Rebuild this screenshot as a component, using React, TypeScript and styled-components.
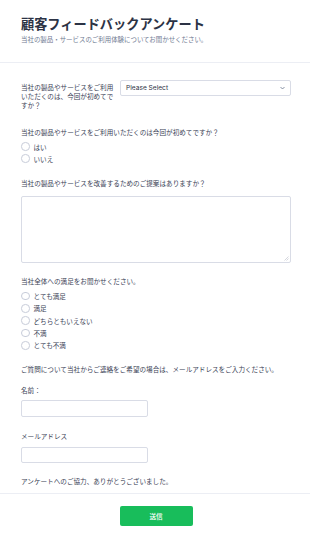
import React from "react";
import styled, { createGlobalStyle } from "styled-components";

const Global = createGlobalStyle`
  html, body { margin: 0; padding: 0; background: #fff; }
  body { font-family: Inter, "Noto Sans CJK JP", "Noto Sans", sans-serif; color: #2c3345; }
  * { box-sizing: border-box; }
`;

const Page = styled.div`
  width: 310px;
  background: #fff;
`;

const Header = styled.header`
  padding: 16px 19px 17px 21px;
  border-bottom: 1px solid #eceef4;
`;

const Title = styled.h1`
  margin: 0;
  font-size: 13.2px;
  line-height: 16px;
  font-weight: 700;
  color: #2c3345;
  letter-spacing: 0;
`;

const Subtitle = styled.p`
  margin: 3.5px 0 0;
  font-size: 6.45px;
  line-height: 9px;
  color: #6f7a92;
`;

const Form = styled.form`
  padding: 17px 19px 0 21px;
  display: flex;
  flex-direction: column;
`;

const Section = styled.div<{ $mt?: number }>`
  margin-top: ${(p) => p.$mt ?? 0}px;
  display: flex;
  flex-direction: column;
`;

const InlineRow = styled.div`
  display: flex;
  align-items: flex-start;
  gap: 6px;
`;

const Label = styled.label<{ $width?: number; $mt?: number }>`
  display: block;
  font-size: 6.6px;
  line-height: 9px;
  font-weight: 400;
  color: #3a4256;
  ${(p) => (p.$width ? `width: ${p.$width}px; flex: none;` : "")}
  margin-top: ${(p) => p.$mt ?? 0}px;
`;

const SelectBox = styled.div`
  flex: 1;
  height: 16.5px;
  border: 1px solid #d9dce6;
  border-radius: 2px;
  display: flex;
  align-items: center;
  justify-content: space-between;
  padding: 0 5px 0 5px;
  font-size: 6.6px;
  color: #2c3345;
`;

const Options = styled.div<{ $mt: number; $step: number }>`
  margin-top: ${(p) => p.$mt}px;
  display: flex;
  flex-direction: column;
  & > * { height: ${(p) => p.$step}px; }
`;

const Option = styled.div`
  display: flex;
  align-items: center;
  gap: 4px;
  font-size: 6.6px;
  color: #3a4256;
`;

const Radio = styled.span`
  width: 8.5px;
  height: 8.5px;
  border-radius: 50%;
  border: 1px solid #c7ccd9;
  background: #fff;
  flex: none;
`;

const TextArea = styled.div`
  margin-top: 6.5px;
  height: 67px;
  border: 1px solid #d9dce6;
  border-radius: 2px;
  position: relative;
`;

const Grip = styled.svg`
  position: absolute;
  right: 1px;
  bottom: 1px;
`;

const Input = styled.div`
  margin-top: 4.5px;
  width: 127px;
  height: 16.5px;
  border: 1px solid #d9dce6;
  border-radius: 2px;
`;

const Text = styled.p<{ $mt: number }>`
  margin: ${(p) => p.$mt}px 0 0;
  font-size: 6.6px;
  line-height: 9px;
  color: #3a4256;
`;

const Footer = styled.div`
  margin-top: 6.5px;
  border-top: 1px solid #eceef4;
  display: flex;
  justify-content: center;
  padding: 12px 19px 20px 21px;
`;

const Button = styled.button`
  width: 73px;
  height: 19.5px;
  background: #18bd5b;
  border: none;
  border-radius: 2px;
  color: #fff;
  font-family: inherit;
  font-size: 6.6px;
  font-weight: 500;
`;

const RadioGroup: React.FC<{ items: string[]; mt: number; step: number }> = ({ items, mt, step }) => (
  <Options $mt={mt} $step={step}>
    {items.map((t) => (
      <Option key={t}>
        <Radio />
        <span>{t}</span>
      </Option>
    ))}
  </Options>
);

export default function App() {
  return (
    <Page>
      <Global />
      <Header>
        <Title>顧客フィードバックアンケート</Title>
        <Subtitle>当社の製品・サービスのご利用体験についてお聞かせください。</Subtitle>
      </Header>
      <Form onSubmit={(e) => e.preventDefault()}>
        <InlineRow>
          <Label $width={93} $mt={4.5}>
            当社の製品やサービスをご利用いただくのは、今回が初めてですか？
          </Label>
          <SelectBox>
            <span>Please Select</span>
            <svg width="5" height="4" viewBox="0 0 10 6">
              <path d="M1 1l4 4 4-4" fill="none" stroke="#57647e" strokeWidth="1.4" />
            </svg>
          </SelectBox>
        </InlineRow>
        <Section $mt={18}>
          <Label>当社の製品やサービスをご利用いただくのは今回が初めてですか？</Label>
          <RadioGroup items={["はい", "いいえ"]} mt={2.5} step={12} />
        </Section>
        <Section $mt={15.5}>
          <Label>当社の製品やサービスを改善するためのご提案はありますか？</Label>
          <TextArea>
            <Grip width="5" height="5" viewBox="0 0 5 5">
              <path d="M4.5 0.5L0.5 4.5M4.5 2.5L2.5 4.5" stroke="#b8bcc8" strokeWidth="0.6" />
            </Grip>
          </TextArea>
        </Section>
        <Section $mt={15.5}>
          <Label>当社全体への満足をお聞かせください。</Label>
          <RadioGroup
            items={["とても満足", "満足", "どちらともいえない", "不満", "とても不満"]}
            mt={3}
            step={12.3}
          />
        </Section>
        <Text $mt={14.5}>ご質問について当社からご連絡をご希望の場合は、メールアドレスをご入力ください。</Text>
        <Section $mt={12}>
          <Label>名前：</Label>
          <Input />
        </Section>
        <Section $mt={16.5}>
          <Label>メールアドレス</Label>
          <Input />
        </Section>
        <Text $mt={14.5}>アンケートへのご協力、ありがとうございました。</Text>
      </Form>
      <Footer>
        <Button type="submit">送信</Button>
      </Footer>
    </Page>
  );
}
